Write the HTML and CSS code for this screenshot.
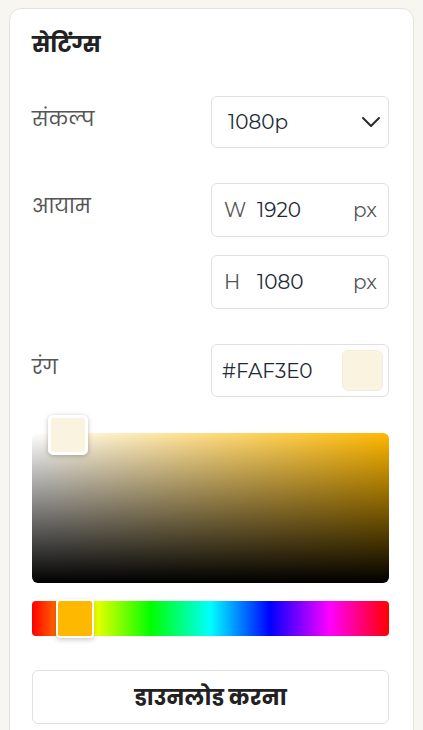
FILE: index.html
```html
<!DOCTYPE html>
<html lang="hi">
<head>
<meta charset="utf-8">
<link rel="stylesheet" href="styles.css">
</head>
<body>
<div class="card">
  <h2 class="title">सेटिंग्स</h2>

  <div class="row">
    <div class="label">संकल्प</div>
    <div class="fields">
      <div class="box select">
        <span class="val">1080p</span>
        <svg class="chev" width="20" height="12" viewBox="0 0 20 12"><path d="M2 2 L10 10 L18 2" fill="none" stroke="#2a2a2a" stroke-width="2" stroke-linecap="round" stroke-linejoin="round"/></svg>
      </div>
    </div>
  </div>

  <div class="row">
    <div class="label">आयाम</div>
    <div class="fields">
      <div class="box dim"><span class="pre">W</span><span class="num">1920</span><span class="unit">px</span></div>
      <div class="box dim"><span class="pre">H</span><span class="num">1080</span><span class="unit">px</span></div>
    </div>
  </div>

  <div class="row last">
    <div class="label">रंग</div>
    <div class="fields">
      <div class="box color"><span class="hex">#FAF3E0</span><span class="swatch"></span></div>
    </div>
  </div>

  <div class="picker">
    <div class="sv"></div>
    <div class="sv-handle"></div>
  </div>

  <div class="hue">
    <div class="hue-handle"></div>
  </div>

  <button class="download">डाउनलोड करना</button>
</div>
</body>
</html>
```

FILE: styles.css
```css
* { box-sizing: border-box; }
html, body { margin: 0; padding: 0; }
body {
  background: #f8f6f0;
  font-family: "Poppins", sans-serif;
  padding: 8px 9px 0 9px;
  height: 730px;
  overflow: hidden;
}
.card {
  width: 405px;
  background: #fff;
  border: 1px solid #e4e2dd;
  border-radius: 12px;
  padding: 20px 24px 24px 22px;
}
.title {
  margin: 0 0 35px 0;
  font-family: "Poppins", sans-serif;
  font-size: 22px;
  font-weight: 700;
  color: #222;
  line-height: 32px;
}
.row {
  display: flex;
  justify-content: space-between;
  align-items: flex-start;
  margin-bottom: 35px;
}
.row.last { margin-bottom: 36px; }
.label {
  font-family: "Poppins", sans-serif;
  font-size: 20px;
  font-weight: 400;
  color: #555;
  line-height: 30px;
  padding-top: 8px;
}
.fields {
  width: 178px;
  display: flex;
  flex-direction: column;
  gap: 18px;
}
.box {
  height: 53px;
  border: 1px solid #e0e0e0;
  border-radius: 6px;
  display: flex;
  align-items: center;
  font-family: "Montserrat", sans-serif;
  font-size: 20px;
  color: #1e2a38;
}
.select {
  height: 52px;
  padding: 0 7px 0 16px;
  justify-content: space-between;
}
.dim {
  height: 54px;
  padding: 0 11px 0 12px;
}
.pre { color: #555; width: 33px; }
.num { flex: 1; }
.unit { color: #555; }
.color {
  padding: 0 5px 0 10px;
  justify-content: space-between;
}
.swatch {
  width: 41px;
  height: 41px;
  border-radius: 6px;
  background: #FAF3E0;
  border: 1px solid #f1ece0;
}
.picker {
  position: relative;
  height: 150px;
}
.sv {
  height: 150px;
  border-radius: 6px;
  background:
    linear-gradient(to top, #000, rgba(0,0,0,0)),
    linear-gradient(to right, #fff, #ffb800);
}
.sv-handle {
  position: absolute;
  left: 16px;
  top: -18px;
  width: 40px;
  height: 40px;
  border-radius: 5px;
  background: #FAF3E0;
  border: 3px solid #fff;
  box-shadow: 0 1px 5px rgba(0,0,0,0.25);
}
.hue {
  position: relative;
  margin-top: 18px;
  height: 35px;
  border-radius: 4px;
  background: linear-gradient(to right, #f00 0%, #ff0 16.66%, #0f0 33.33%, #0ff 50%, #00f 66.66%, #f0f 83.33%, #f00 100%);
}
.hue-handle {
  position: absolute;
  left: 24px;
  top: -2px;
  width: 38px;
  height: 39px;
  border-radius: 4px;
  background: #ffb800;
  border: 2px solid #fff;
  box-shadow: 0 2px 5px rgba(0,0,0,0.2);
}
.download {
  display: block;
  width: 100%;
  margin-top: 34px;
  height: 54px;
  background: #fff;
  border: 1px solid #e0e0e0;
  border-radius: 6px;
  font-family: "Poppins", sans-serif;
  font-size: 22px;
  font-weight: 700;
  color: #222;
}
```
